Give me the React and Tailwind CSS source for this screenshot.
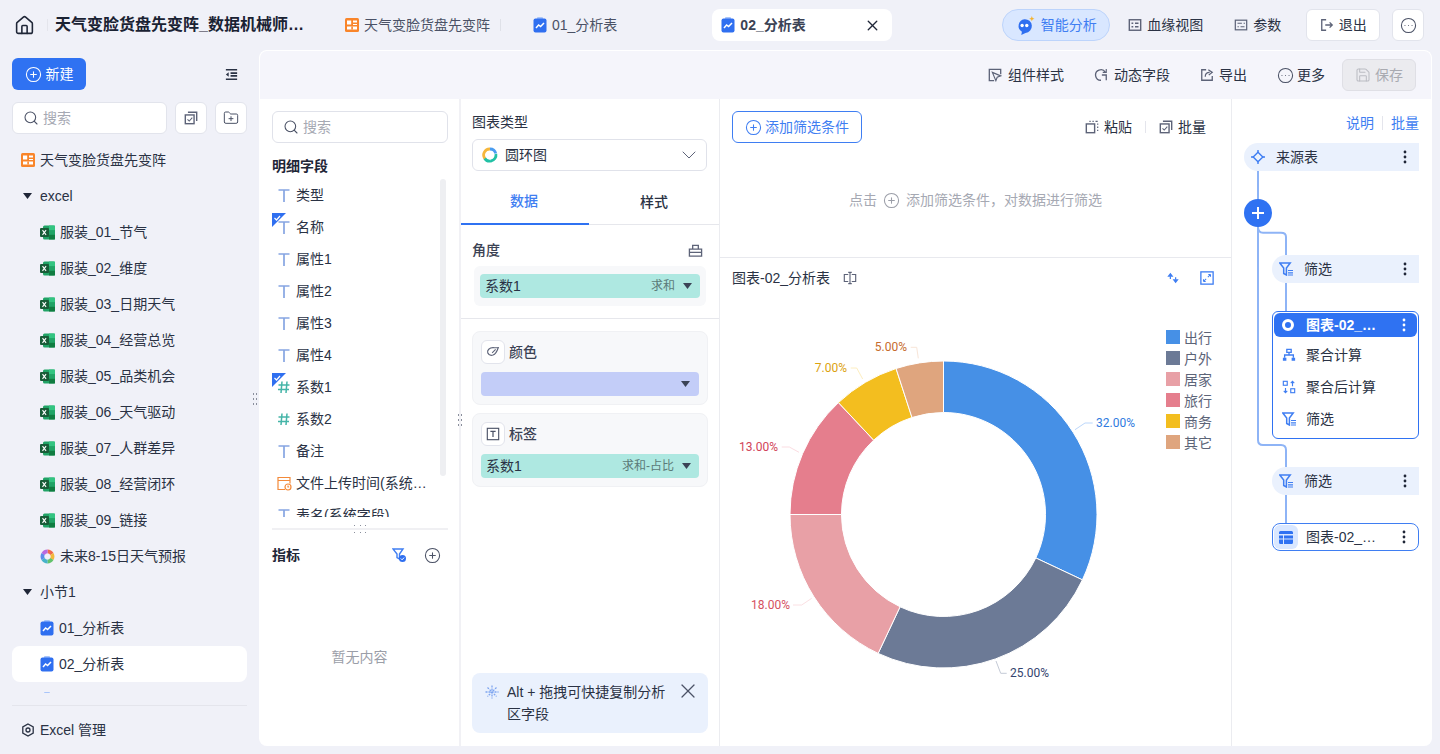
import React from "react";
import { ChevronDown, CirclePlus, CircleEllipsis, FolderPlus, House, Save, Search, X } from "lucide-react";

const S = ({ size = 14, className = "", children, sw = 1.4 }) => (
  <svg width={size} height={size} viewBox="0 0 16 16" fill="none" stroke="currentColor" strokeWidth={sw} className={"shrink-0 " + className}>
    {children}
  </svg>
);

const Grid = ({ size = 14 }) => (
  <svg width={size} height={size} viewBox="0 0 14 14" className="shrink-0">
    <rect width="14" height="14" rx="1.5" fill="#f9852a" />
    <path d="M2 2.500h4.200v4H2zM8 2.500h4v2H8zM8 6h4v1H8zM2 8.500h10v3H2z" fill="#fff" />
    <path d="M6.300 8.500h1.600v3H6.300z" fill="#f9852a" />
  </svg>
);
const Excel = () => (
  <svg width="15" height="15" viewBox="0 0 15 15" className="shrink-0">
    <rect x="3" y="0.500" width="12" height="14" rx="1.500" fill="#21a366" />
    <rect x="9" y="0.500" width="6" height="4.600" fill="#33c481" />
    <rect x="9" y="9.800" width="6" height="4.700" fill="#107c41" />
    <rect x="0" y="3" width="9" height="9" rx="1" fill="#185c37" />
    <path d="M2.500 5.200l3.600 4.600M6.100 5.200L2.500 9.800" stroke="#fff" strokeWidth="1.100" />
  </svg>
);
const Board = () => (
  <svg width="14" height="16" viewBox="0 0 14 16" className="shrink-0">
    <rect x="4" y="0" width="6" height="3" rx="1" fill="#a9c5fa" />
    <rect x="0.500" y="1.500" width="13" height="14" rx="2" fill="#2f6ff0" />
    <path d="M3 11l2.600-3 2 1.600L11 6" stroke="#fff" strokeWidth="1.500" fill="none" />
  </svg>
);
const Swirl = () => (
  <svg width="15" height="15" viewBox="0 0 15 15" className="shrink-0">
    {["#f0694c", "#f3b83a", "#62c26c", "#46b3c9", "#5b8ee8", "#b86be0"].map((c, i) => (
      <path key={c} d="M7.500 .6A6.900 6.900 0 0 1 13.500 4.100L10.300 6A3.200 3.200 0 0 0 7.500 4.300Z" fill={c} transform={`rotate(${i * 60} 7.500 7.500)`} />
    ))}
  </svg>
);
const Tri = ({ className = "" }) => (
  <svg width="9" height="6" viewBox="0 0 9 6" className={"shrink-0 " + className}>
    <path d="M0 0h9L4.500 6z" fill="currentColor" />
  </svg>
);
const Dots = ({ fill = "#1f2637" }) => (
  <svg width="4" height="14" viewBox="0 0 4 14" className="shrink-0 ml-auto">
    <circle cx="2" cy="2" r="1.400" fill={fill} />
    <circle cx="2" cy="7" r="1.400" fill={fill} />
    <circle cx="2" cy="12" r="1.400" fill={fill} />
  </svg>
);
const Batch = () => (
  <S className="text-[#5d6378]">
    <rect x="1.500" y="4.500" width="10" height="10" strokeWidth="1.600" />
    <path d="M4.500 1.500h10v10" strokeWidth="1.600" />
    <path d="M4 9.500l2 2 3.500-4" strokeWidth="1.200" />
  </S>
);
const Paste = () => (
  <S className="text-[#5d6378]">
    <rect x="1.500" y="4.500" width="9.500" height="10" strokeWidth="1.600" />
    <path d="M5 1.500h1.500M8.500 1.500H10M12 1.500h2.500M14.500 4v1.500M14.500 7.500V9M14.500 11v1.500" strokeWidth="1.400" />
  </S>
);
const TIcon = () => (
  <svg width="14" height="16" viewBox="0 0 14 16" className="shrink-0">
    <path d="M1.500 3h11M7 3v12" stroke="#86a5e2" strokeWidth="1.700" fill="none" />
  </svg>
);
const Hash = () => (
  <svg width="14" height="16" viewBox="0 0 14 16" className="shrink-0">
    <path d="M5 2.500L4 14M10 2.500L9 14M1.500 6h11M1 10.500h11" stroke="#45b5a8" strokeWidth="1.500" fill="none" />
  </svg>
);
const Tick = () => (
  <svg width="14" height="14" viewBox="0 0 14 14" className="absolute left-0 top-[2px]">
    <path d="M0 0h14L0 14z" fill="#2f6ff0" />
    <path d="M2.500 5l2 2 3.500-4" stroke="#fff" strokeWidth="1.200" fill="none" />
  </svg>
);
const Funnel = () => (
  <svg width="14" height="14" viewBox="0 0 14 14" className="shrink-0">
    <path d="M0.800 1h10.400L7.400 6v7L4.700 11.500V6z" fill="none" stroke="#3f7ef2" strokeWidth="1.500" />
    <path d="M9 8.500h5M9 10.800h5M9 13h5" stroke="#3f7ef2" strokeWidth="1.200" />
  </svg>
);

const fields = [
  ["类型", TIcon], ["名称", TIcon, 1], ["属性1", TIcon], ["属性2", TIcon], ["属性3", TIcon], ["属性4", TIcon],
  ["系数1", Hash, 1], ["系数2", Hash], ["备注", TIcon],
];
const sheets = ["服装_01_节气", "服装_02_维度", "服装_03_日期天气", "服装_04_经营总览", "服装_05_品类机会", "服装_06_天气驱动", "服装_07_人群差异", "服装_08_经营闭环", "服装_09_链接"];

const Row = ({ icon, children, active, indent = "pl-[28px]" }) => (
  <div className={`h-9 flex items-center gap-[5px] rounded-lg text-[14px] text-[#2a3244] shrink-0 ${indent} ${active ? "bg-white" : ""}`}>
    {icon}
    <span className="truncate">{children}</span>
  </div>
);

const Chip = ({ name, agg, className = "" }) => (
  <div className={`h-6 rounded-sm bg-[#aee8e1] flex items-center justify-between pl-[5px] pr-[8px] text-[14px] text-[#2a3244] ${className}`}>
    <span>{name}</span>
    <span className="flex items-center gap-[8px] text-[12px] text-[#5b7a78]">
      {agg}
      <Tri className="text-[#3b4356]" />
    </span>
  </div>
);

const ToolItem = ({ icon, children, gap = "gap-[6px]" }) => (
  <div className={`flex items-center text-[14px] text-[#2a3244] ${gap}`}>
    {icon}
    <span>{children}</span>
  </div>
);

const Node = ({ icon, label }) => (
  <div className="h-7 ml-10 mr-3 rounded-l-full rounded-r-md bg-[#eaf1fd] flex items-center pl-[7px] pr-[12px] text-[14px] text-[#2a3244]">
    {icon}
    <span className="ml-[11px]">{label}</span>
    <Dots />
  </div>
);

const CX = 943.5, CY = 515.5, RO = 153.5, RI = 102;
const slices = [
  [32, "#4690e6"], [25, "#6c7a96"], [18, "#e8a0a6"], [13, "#e57e8d"], [7, "#f3be1f"], [5, "#dfa57e"],
];
const pt = (r, a) => [CX + r * Math.sin(a), CY - r * Math.cos(a)];
const arcs = (() => {
  let acc = 0;
  return slices.map(([v, c]) => {
    const a0 = (acc / 100) * 2 * Math.PI;
    acc += v;
    const a1 = (acc / 100) * 2 * Math.PI;
    const large = a1 - a0 > Math.PI ? 1 : 0;
    const [x0, y0] = pt(RO, a0), [x1, y1] = pt(RO, a1), [x2, y2] = pt(RI, a1), [x3, y3] = pt(RI, a0);
    return { c, d: `M${x0} ${y0}A${RO} ${RO} 0 ${large} 1 ${x1} ${y1}L${x2} ${y2}A${RI} ${RI} 0 ${large} 0 ${x3} ${y3}Z` };
  });
})();
const labels = [
  ["32.00%", 1096, 423, "start", "#2f7be0", "#bcd7fb", "M1075 430.700L1085 424H1092.700"],
  ["25.00%", 1010, 673, "start", "#33446e", "#c4cad6", "M996 662L1000.700 674.300H1006.700"],
  ["18.00%", 790, 605, "end", "#d5505f", "#fbe0e3", "M811.700 599.300L801.700 606H793"],
  ["13.00%", 778, 447, "end", "#d14358", "#fbdde2", "M799 453.300L789.300 448H781.700"],
  ["7.00%", 847, 368, "end", "#dca20e", "#fdeec0", "M862.700 380L856.700 369H850.700"],
  ["5.00%", 907, 347, "end", "#c66b2c", "#f8e5d8", "M918.300 359.300L916.700 348.300H910.700"],
];
const legend = ["出行", "户外", "居家", "旅行", "商务", "其它"];

const Donut = () => (
  <svg width="511" height="447" viewBox="720 299 511 447" className="block">
    {arcs.map((a, i) => <path key={i} d={a.d} fill={a.c} stroke="#fff" strokeWidth="1" />)}
    {labels.map(([t, x, y, anchor, col, lc, d]) => (
      <g key={t}>
        <path d={d} stroke={lc} fill="none" />
        <text x={x} y={y} dy="4.500" textAnchor={anchor} fontSize="12" fontFamily="Roboto, sans-serif" fill={col}>{t}</text>
      </g>
    ))}
    {legend.map((t, i) => (
      <g key={t}>
        <rect x="1166" y={331 + i * 21} width="14" height="14" fill={slices[i][1]} />
        <text x="1184" y={344 + i * 21} fontSize="14" fill="#5c6478">{t}</text>
      </g>
    ))}
  </svg>
);

const Grip = ({ className = "" }) => (
  <div className={`absolute flex gap-[2px] ${className}`}>
    {[0, 1].map(c => (
      <div key={c} className="flex flex-col gap-[3px]">
        {[0, 1, 2].map(i => <i key={i} className="w-px h-[2px] bg-[#8a8f9c]" />)}
      </div>
    ))}
  </div>
);

export default function App() {
  return (
    <div className="w-[1440px] h-[754px] overflow-hidden flex flex-col bg-[#f0f1f8] text-[14px] text-[#2a3244] [font-family:'Liberation_Sans','Noto_Sans_CJK_SC',sans-serif]">
      {/* header */}
      <header className="h-[50px] shrink-0 flex items-center relative">
        <House size={21} strokeWidth={1.8} className="ml-[14px] text-[#1f2637] shrink-0" />
        <div className="ml-3 w-px h-3 bg-[#e4e5ec]" />
        <div className="ml-[7px] w-[252px] truncate text-[16px] font-bold text-[#1a2233]">天气变脸货盘先变阵_数据机械师版本一</div>
        <div className="ml-[38px] flex items-center gap-[5px] text-[#4b5266]"><Grid /><span>天气变脸货盘先变阵</span></div>
        <div className="ml-[10px] w-px h-3 bg-[#dfe1e8]" />
        <div className="ml-[32px] flex items-center gap-[5px] text-[#4b5266]"><Board /><span>01_分析表</span></div>
        <div className="ml-[95px] w-[180px] h-8 rounded-lg bg-white flex items-center pl-[9px] pr-[11px] gap-[5px]">
          <Board />
          <span className="font-bold text-[#3b4254] flex-1">02_分析表</span>
          <X size={17} strokeWidth={1.9} className="text-[#1f2637]" />
        </div>
        <div className="ml-[110px] w-[108px] h-8 rounded-full bg-[#d9e7ff] border border-[#bdd4fb] flex items-center justify-center gap-[6px] text-[#3f7ef2]">
          <svg width="19" height="19" viewBox="0 0 18 18" className="shrink-0">
            <path d="M8 3a6.500 6.500 0 0 1 1 13l-4 2 .6-3A6.500 6.500 0 0 1 8 3z" fill="#2f6ff0" />
            <circle cx="5.800" cy="9" r="1.600" fill="#fff" /><circle cx="10.200" cy="9" r="1.600" fill="#fff" />
            <path d="M15 0l.7 1.800L17.500 2.500l-1.800.7L15 5l-.7-1.800L12.500 2.500l1.800-.7z" fill="#f5b22c" />
          </svg>
          <span>智能分析</span>
        </div>
        <div className="ml-[18px]"><ToolItem gap="gap-[5px]" icon={
          <S className="text-[#5d6378]"><rect x="1.500" y="2" width="13" height="12" strokeWidth="1.600" /><path d="M4 6h2M4 10h2M8 6h4M8 10h4" strokeWidth="1.600" /></S>
        }>血缘视图</ToolItem></div>
        <div className="ml-[31px]"><ToolItem gap="gap-[5px]" icon={
          <S className="text-[#5d6378]"><rect x="1.500" y="2.500" width="13" height="11" strokeWidth="1.400" /><path d="M4 6h5M11 6h1.500M4 10h1.500M7.500 10H12" strokeWidth="1.400" /></S>
        }>参数</ToolItem></div>
        <div className="ml-[25px] w-[74px] h-8 rounded-md bg-white border border-[#e2e4ec] flex items-center justify-center gap-[5px]">
          <S className="text-[#5d6378]"><path d="M7 2H2v12h5" strokeWidth="1.500" /><path d="M6 8h8M11 5l3 3-3 3" strokeWidth="1.500" /></S>
          <span>退出</span>
        </div>
        <div className="ml-3 w-8 h-8 rounded-md bg-white border border-[#e2e4ec] flex items-center justify-center">
          <CircleEllipsis size={17} strokeWidth={1.5} className="text-[#4b5266]" />
        </div>
      </header>

      <div className="flex-1 min-h-0 flex">
        {/* sidebar */}
        <aside className="w-[259px] shrink-0 flex flex-col relative">
          <div className="flex items-center justify-between pl-3 pr-[20px] mt-2">
            <div className="w-[74px] h-8 rounded-md bg-[#2f72f2] text-white flex items-center justify-center gap-[4px]">
              <CirclePlus size={17} strokeWidth={1.5} />
              <span>新建</span>
            </div>
            <S className="text-[#2a3244]" size={15}><path d="M2 3h12M7 6.500h7M7 9.500h7M2 13h12" strokeWidth="1.700" /><path d="M5 5.500L2 8l3 2.500z" fill="currentColor" stroke="none" /></S>
          </div>
          <div className="flex items-center pl-3 mt-3">
            <div className="w-[155px] h-8 rounded-md bg-white border border-[#e2e4ec] flex items-center pl-[10px] gap-[4px] text-[#a6a9b3]">
              <Search size={16} strokeWidth={1.6} className="text-[#4b5266]" />
              <span>搜索</span>
            </div>
            <div className="ml-2 w-8 h-8 rounded-md bg-white border border-[#e2e4ec] flex items-center justify-center"><Batch /></div>
            <div className="ml-2 w-8 h-8 rounded-md bg-white border border-[#e2e4ec] flex items-center justify-center">
              <FolderPlus size={16} strokeWidth={1.5} className="text-[#4b5266]" />
            </div>
          </div>
          <div className="mt-2 mx-3 h-[551px] shrink-0 overflow-hidden flex flex-col">
            <Row indent="pl-[9px]" icon={<Grid />}>天气变脸货盘先变阵</Row>
            <Row indent="pl-[11px]" icon={<Tri className="text-[#1f2637] mr-[3px]" />}>excel</Row>
            {sheets.map(s => <Row key={s} icon={<Excel />}>{s}</Row>)}
            <Row icon={<Swirl />}>未来8-15日天气预报</Row>
            <Row indent="pl-[11px]" icon={<Tri className="text-[#1f2637] mr-[3px]" />}>小节1</Row>
            <Row icon={<Board />}>01_分析表</Row>
            <Row active icon={<Board />}>02_分析表</Row>
            <div className="h-9 pl-[28px] pt-[10px] shrink-0"><Board /></div>
          </div>
          <div className="mt-3 mx-3 h-px bg-[#e4e5ec] shrink-0" />
          <div className="h-[48px] shrink-0 flex items-center pl-[21px] gap-[5px] text-[14px]">
            <svg width="14" height="14" viewBox="0 0 14 14" fill="none" stroke="#2a3244" strokeWidth="1.300" className="shrink-0">
              <path d="M7 1l5.200 3v6L7 13l-5.200-3V4z" /><circle cx="7" cy="7" r="2" />
            </svg>
            <span>Excel 管理</span>
          </div>
          <Grip className="right-[2px] top-[343px]" />
        </aside>

        {/* main */}
        <main className="w-[1173px] h-[696px] rounded-lg bg-white border-t border-x border-white overflow-hidden flex flex-col">
          <div className="h-[48px] shrink-0 bg-[#f5f5fb] flex items-center justify-end pr-[15px] gap-[30px]">
            <ToolItem icon={
              <S className="text-[#5d6378]"><path d="M14.500 7V1.500h-13v13H7" strokeWidth="1.500" /><path d="M5 5l9.500 4-4 1.500-1.500 4z" strokeWidth="1.300" /></S>
            }>组件样式</ToolItem>
            <ToolItem icon={
              <S className="text-[#5d6378]"><path d="M13 5A6 6 0 1 0 8 14" strokeWidth="1.500" /><path d="M9 8h5v6" strokeWidth="1.500" /><path d="M14 1v4h-4" strokeWidth="1.300" /></S>
            }>动态字段</ToolItem>
            <ToolItem gap="gap-[5px]" icon={
              <S className="text-[#5d6378]"><path d="M7 2H2v12h12V9" strokeWidth="1.500" /><path d="M6 10c0-3 2-5 5-5M9.500 2L14 5l-4 3" strokeWidth="1.400" /></S>
            }>导出</ToolItem>
            <ToolItem gap="gap-[3px]" icon={<CircleEllipsis size={17} strokeWidth={1.5} className="text-[#4b5266]" />}>更多</ToolItem>
            <div className="-ml-[13px] w-[74px] h-8 rounded-md bg-[#ebebef] border border-[#dfdfe5] flex items-center justify-center gap-[4px] text-[#a9aab1]">
              <Save size={16} strokeWidth={1.6} className="text-[#bcbdc4]" />
              <span>保存</span>
            </div>
          </div>

          <div className="flex-1 min-h-0 flex">
            {/* fields */}
            <section className="w-[201px] shrink-0 border-r-2 border-[#f1f1f5] flex flex-col relative">
              <div className="ml-3 w-[176px] mt-3 h-8 rounded-md border border-[#e0e2ea] flex items-center pl-[10px] gap-[4px] text-[#a6a9b3]">
                <Search size={16} strokeWidth={1.6} className="text-[#4b5266]" />
                <span>搜索</span>
              </div>
              <div className="ml-3 mt-[13px] h-[20px] leading-[20px] font-bold text-[#1f2637]">明细字段</div>
              <div className="ml-3 w-[176px] h-[338px] mt-[3px] overflow-hidden relative shrink-0">
                <div className="absolute right-[2px] top-0 w-[6px] h-[297px] rounded-full bg-[#eeeff2]" />
                {fields.map(([t, I, tick]) => (
                  <div key={t} className="h-8 flex items-center relative pl-[5px] gap-[5px]">
                    {tick ? <Tick /> : null}
                    <I />
                    <span>{t}</span>
                  </div>
                ))}
                <div className="h-8 flex items-center pl-[5px] gap-[4px]">
                  <svg width="15" height="15" viewBox="0 0 15 15" fill="none" stroke="#f38a3a" strokeWidth="1.200" className="shrink-0">
                    <path d="M8 13.500H1V1.500h12v6M1 4.500h12" /><circle cx="11" cy="11" r="3" /><path d="M11 9.500V11h1.200" />
                  </svg>
                  <span className="w-[131px] truncate">文件上传时间(系统字段)</span>
                </div>
                <div className="h-8 flex items-center pl-[5px] gap-[5px]"><TIcon /><span>表名(系统字段)</span></div>
              </div>
              <div className="ml-3 w-[176px] mt-[11px] h-[2px] bg-[#f0f0f3] relative shrink-0">
                <span className="absolute left-[82px] -top-[3px] w-[14px] h-[8px] grid grid-cols-3 gap-y-[5px] gap-x-[3px]">
                  {[0, 1, 2, 3, 4, 5].map(i => <i key={i} className="w-px h-px bg-[#8a8f9c]" />)}
                </span>
              </div>
              <div className="ml-3 w-[176px] mt-[15px] h-[20px] flex items-center font-bold text-[#1f2637]">
                <span className="flex-1">指标</span>
                <svg width="14" height="14" viewBox="0 0 14 14" className="shrink-0 mr-[18px]">
                  <path d="M1 1h10L7.500 6v5L5 9.500V6z" fill="none" stroke="#3f7ef2" strokeWidth="1.400" />
                  <circle cx="10.500" cy="10.500" r="3.500" fill="#2f6ff0" /><path d="M8.800 10.500l1.300 1.300 2-2.200" stroke="#fff" fill="none" />
                </svg>
                <CirclePlus size={17} strokeWidth={1.5} className="text-[#4b5266] mr-[7px]" />
              </div>
              <div className="text-center mt-[82px] text-[#9b9ea8]">暂无内容</div>
              <Grip className="-right-[3px] top-[315px]" />
            </section>

            {/* config */}
            <section className="w-[259px] shrink-0 border-r border-[#ebecf0] flex flex-col">
              <div className="ml-[11px] mt-[13px] h-5 leading-5">图表类型</div>
              <div className="ml-[11px] mr-[12px] mt-[7px] h-8 rounded-md border border-[#e0e2ea] flex items-center pl-[9px] pr-[5px] gap-[7px]">
                <svg width="16" height="16" viewBox="0 0 16 16" fill="none" strokeWidth="2.800" className="shrink-0">
                  <path d="M8 2a6 6 0 0 1 5.800 4.500" stroke="#4a9cf0" /><path d="M13.900 7a6 6 0 0 1-5 7" stroke="#21c1a5" />
                  <path d="M9 14A6 6 0 0 1 2.500 11" stroke="#21c1a5" /><path d="M2.800 11.500A6 6 0 0 1 8 2" stroke="#f6b73c" />
                </svg>
                <span className="flex-1">圆环图</span>
                <ChevronDown size={24} strokeWidth={1} className="text-[#5d6378]" />
              </div>
              <div className="mt-[9px] h-[45px] flex border-b border-[#e6e7ec] shrink-0">
                <div className="w-[128px] border-b-2 border-[#2f72f2] -mb-px flex items-center justify-center font-medium text-[#3f7ef2] pr-[2px]">数据</div>
                <div className="flex-1 flex items-center justify-center font-medium">样式</div>
              </div>
              <div className="ml-[11px] mr-[16px] mt-[15px] h-5 flex items-center justify-between font-medium text-[#3b4254]">
                <span>角度</span>
                <S size={15} className="text-[#5d6378]"><path d="M1.500 6.500h13V14h-13zM5 6.500V2.500h6v4M1.500 10h13" strokeWidth="1.400" /></S>
              </div>
              <div className="ml-[13px] mr-[13px] mt-[6px] h-10 rounded-md bg-[#f7f8fa] flex items-center px-[6px]">
                <Chip name="系数1" agg="求和" className="flex-1" />
              </div>
              <div className="mt-3 h-px bg-[#e6e7ec] shrink-0" />
              <div className="ml-[11px] mr-[11px] mt-3 h-[74px] rounded-lg bg-[#f7f8fa] border border-[#f0f1f4] px-2 pt-2 flex flex-col">
                <div className="flex items-center gap-[4px] h-6 font-medium text-[#3b4254]">
                  <div className="w-6 h-6 rounded-md bg-white border border-[#e2e4ec] flex items-center justify-center">
                    <S size={14} className="text-[#5d6378]"><path d="M2 9c-1-3 2-6 6-6 2 0 3 .5 6 0-1 3-2 7-6 8.500-3 1-5-.5-6-2.500z" strokeWidth="1.300" /><path d="M7 9l4-4" strokeWidth="1.300" /></S>
                  </div>
                  <span>颜色</span>
                </div>
                <div className="mt-2 h-6 rounded-sm bg-[#c3cdf8] flex items-center justify-end pr-[9px]"><Tri className="text-[#3b4356]" /></div>
              </div>
              <div className="ml-[11px] mr-[11px] mt-2 h-[74px] rounded-lg bg-[#f7f8fa] border border-[#f0f1f4] px-2 pt-2 flex flex-col">
                <div className="flex items-center gap-[4px] h-6 font-medium text-[#3b4254]">
                  <div className="w-6 h-6 rounded-md bg-white border border-[#e2e4ec] flex items-center justify-center">
                    <S size={14} className="text-[#4b5266]"><rect x="1.500" y="1.500" width="13" height="13" strokeWidth="1.300" /><path d="M5 5h6M8 5v6.500" strokeWidth="1.400" /></S>
                  </div>
                  <span>标签</span>
                </div>
                <Chip name="系数1" agg="求和-占比" className="mt-2" />
              </div>
              <div className="ml-[11px] mr-[11px] mt-auto mb-[13px] h-[60px] rounded-lg bg-[#eaf1fd] flex pl-[13px] pr-[8px] pt-[8px]">
                <svg width="14" height="14" viewBox="0 0 14 14" fill="none" stroke="#7ea5f0" strokeWidth="1.300" className="shrink-0 mt-[4px]">
                  <path d="M7 .5v13M.5 7h13M2.500 2.500l9 9M11.500 2.500l-9 9" strokeDasharray="2 1" />
                </svg>
                <div className="ml-2 w-[164px] text-[14px] leading-[22px]">Alt + 拖拽可快捷复制分析区字段</div>
                <X size={24} strokeWidth={1.2} className="ml-auto -mt-[2px] text-[#4b5266] shrink-0" />
              </div>
            </section>

            {/* center */}
            <section className="w-[512px] shrink-0 border-r border-[#ebecf0] flex flex-col">
              <div className="h-[159px] shrink-0 border-b border-[#e8e9ee] flex flex-col">
                <div className="mt-3 ml-3 mr-[25px] flex items-center">
                  <div className="w-[130px] h-8 rounded-md border border-[#3f7ef2] text-[#3f7ef2] flex items-center justify-center gap-[3px]">
                    <CirclePlus size={17} strokeWidth={1.5} />
                    <span>添加筛选条件</span>
                  </div>
                  <div className="ml-auto flex items-center"><ToolItem gap="gap-[5px]" icon={<Paste />}>粘贴</ToolItem></div>
                  <div className="mx-[13px] w-px h-3 bg-[#e4e5ec]" />
                  <ToolItem gap="gap-[5px]" icon={<Batch />}>批量</ToolItem>
                </div>
                <div className="mt-[47px] flex items-center justify-center gap-[6px] text-[#a6a9b3]">
                  <span>点击</span>
                  <CirclePlus size={17} strokeWidth={1.5} className="text-[#9b9ea8]" />
                  <span>添加筛选条件，对数据进行筛选</span>
                </div>
              </div>
              <div className="h-[40px] shrink-0 flex items-center pl-3 pr-[17px]">
                <span>图表-02_分析表</span>
                <S size={14} className="ml-[13px] text-[#5d6378]"><path d="M6 4H1.500v8H6M10 4h4.500v8H10M8 1.500v13M6 1.500h4M6 14.500h4" strokeWidth="1.300" /></S>
                <S size={14} className="ml-auto text-[#3f7ef2]"><path d="M5 2L1.500 6.500h7zM11 14l3.500-4.500h-7z" fill="currentColor" stroke="none" /><path d="M5 6v3M11 10V7" strokeWidth="1.400" /></S>
                <S size={14} className="ml-[20px] text-[#3f7ef2]"><rect x="1" y="1" width="14" height="14" strokeWidth="1.500" /><path d="M9 7l3-3M12 4H9.500M12 4v2.500M7 9l-3 3M4 12h2.500M4 12V9.500" strokeWidth="1.200" /></S>
              </div>
              <div className="flex-1 min-h-0"><Donut /></div>
            </section>

            {/* flow */}
            <section className="flex-1 relative flex flex-col">
              <svg width="199" height="647" className="absolute left-0 top-0" fill="none" stroke="#8eb4f6" strokeWidth="2">
                <path d="M26 72V341Q26 346 31 346H49Q54 346 54 351V368" />
                <path d="M26 128Q26 133.700 31 133.700H49Q54 133.700 54 138V156" />
                <path d="M54 184V212M54 396V424" />
              </svg>
              <div className="relative flex flex-col">
                <div className="mt-[14px] h-5 flex items-center justify-end pr-3 text-[#3f7ef2]">
                  <span>说明</span>
                  <span className="mx-2 w-px h-[14px] bg-[#e4e5ec]" />
                  <span>批量</span>
                </div>
                <div className="mt-[10px] ml-3 mr-3 h-7 rounded-l-full rounded-r-md bg-[#eaf1fd] flex items-center pl-[7px] pr-[12px]">
                  <S size={14} className="text-[#3f7ef2]"><path d="M8 2.500L13.500 8 8 13.500 2.500 8z" strokeWidth="1.600" /><path d="M8 0v3M8 13v3M0 8h3M13 8h3" strokeWidth="1.600" /></S>
                  <span className="ml-[11px]">来源表</span>
                  <Dots />
                </div>
                <div className="mt-[28px] ml-3 w-7 h-7 rounded-full bg-[#2f72f2] flex items-center justify-center">
                  <svg width="14" height="14" viewBox="0 0 14 14" stroke="#fff" strokeWidth="2"><path d="M7 1v12M1 7h12" /></svg>
                </div>
                <div className="mt-[28px]"><Node icon={<Funnel />} label="筛选" /></div>
                <div className="mt-[28px] ml-10 mr-3 h-32 rounded-md border border-[#2f72f2] bg-white px-px pt-px">
                  <div className="h-6 rounded-md bg-[#2f72f2] text-white flex items-center pl-[7px] pr-[11px] font-bold">
                    <svg width="14" height="14" viewBox="0 0 14 14" className="shrink-0" fill="none" stroke="#fff" strokeWidth="3"><circle cx="7" cy="7" r="4.500" /></svg>
                    <span className="ml-[11px] w-[71px] truncate">图表-02_分析表</span>
                    <Dots fill="#fff" />
                  </div>
                  <div className="h-8 mt-[2px] flex items-center pl-[8px] gap-[10px]">
                    <S size={14} className="text-[#3f7ef2]"><path d="M5.500 1.500h5v3.500h-5zM8 5v3M3 11V8h10v3" strokeWidth="1.500" /><path d="M1 11h4v3.500H1zM11 11h4v3.500h-4z" fill="currentColor" stroke="none" /></S>
                    <span>聚合计算</span>
                  </div>
                  <div className="h-8 flex items-center pl-[8px] gap-[10px]">
                    <S size={14} className="text-[#3f7ef2]"><rect x="1.500" y="1.500" width="4.500" height="4.500" strokeWidth="1.300" /><rect x="10" y="10" width="4.500" height="4.500" strokeWidth="1.300" /><path d="M12 7V1.500M10 3.500l2-2 2 2M4 9v5.500M2 12.500l2 2 2-2" strokeWidth="1.300" /></S>
                    <span>聚合后计算</span>
                  </div>
                  <div className="h-8 flex items-center pl-[8px] gap-[10px]">
                    <Funnel />
                    <span>筛选</span>
                  </div>
                </div>
                <div className="mt-[28px]"><Node icon={<Funnel />} label="筛选" /></div>
                <div className="mt-[28px] ml-10 mr-3 h-7 rounded-lg border border-[#3f7ef2] bg-white flex items-center pl-px pr-[12px]">
                  <div className="w-6 h-6 rounded-md bg-[#d9e7ff] flex items-center justify-center shrink-0">
                    <svg width="14" height="13" viewBox="0 0 14 13" className="shrink-0">
                      <path d="M0 1.500A1.500 1.500 0 0 1 1.500 0h11A1.500 1.500 0 0 1 14 1.500V3H0zM0 4.500h4v3H0zM5 4.500h9v3H5zM0 8.500h4V13H1.500A1.500 1.500 0 0 1 0 11.500zM5 8.500h9v3a1.500 1.500 0 0 1-1.500 1.500H5z" fill="#2f72f2" />
                    </svg>
                  </div>
                  <span className="ml-2 w-[71px] truncate">图表-02_分析表</span>
                  <Dots />
                </div>
              </div>
            </section>
          </div>
        </main>
      </div>
    </div>
  );
}
